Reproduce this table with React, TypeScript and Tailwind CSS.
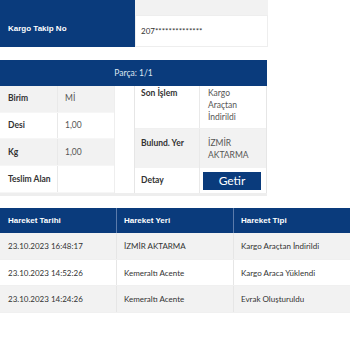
import React from "react";

const blue = "bg-[#0a3b7c]";

const leftRows = [
  { label: "Birim", value: "Mİ", gray: true },
  { label: "Desi", value: "1,00", gray: false },
  { label: "Kg", value: "1,00", gray: true },
  { label: "Teslim Alan", value: "", gray: false },
];

const moves = [
  { date: "23.10.2023 16:48:17", place: "İZMİR AKTARMA", type: "Kargo Araçtan İndirildi" },
  { date: "23.10.2023 14:52:26", place: "Kemeraltı Acente", type: "Kargo Araca Yüklendi" },
  { date: "23.10.2023 14:24:26", place: "Kemeraltı Acente", type: "Evrak Oluşturuldu" },
];

export default function App() {
  return (
    <div className="w-[350px] h-[350px] bg-white overflow-hidden font-['Lato','Noto_Sans',sans-serif] text-[#444]">
      {/* Takip no */}
      <div className="flex w-[268px]">
        <div className={`${blue} w-[135px] h-[47px] flex items-end pb-[12px] pl-[8px]`}>
          <span className="font-['Liberation_Sans',Arial,sans-serif] font-bold text-white text-[8px] leading-[12px]">
            Kargo Takip No
          </span>
        </div>
        <div className="flex-1 flex flex-col">
          <div className="h-[15px] bg-[#f2f2f2]" />
          <div className="h-[32px] border border-[#eeeeee] flex items-center pl-[5px] text-[8px] text-[#333]">
            207**************
          </div>
        </div>
      </div>

      {/* Parça */}
      <div className="mt-[13px] w-[267px] border-b-[3px] border-[#eeeeee]">
        <div className={`${blue} h-[26px] flex items-center justify-center text-[8.5px] text-[#dfe6f0]`}>
          Parça: 1/1
        </div>
        <div className="flex justify-between">
          <div className="w-[115px] border-r border-[#eeeeee]">
            {leftRows.map((r) => (
              <div
                key={r.label}
                className={`flex h-[26.7px] ${r.gray ? "bg-[#f2f2f2]" : "bg-white"} border-b border-[#f6f6f6]`}
              >
                <div className="w-[58px] border-r border-[#e9e9e9] flex items-center pl-[8px] font-bold text-[8.5px] text-[#333]">
                  {r.label}
                </div>
                <div className="flex-1 flex items-center pl-[7px] text-[8.5px] text-[#555]">{r.value}</div>
              </div>
            ))}
          </div>
          <div className="w-[133px] border-l border-r border-[#e6e6e6]">
            <div className="flex h-[43px] bg-white border-b border-[#f0f0f0]">
              <div className="w-[65px] border-r border-[#e9e9e9] pl-[6px] pt-[1px] font-bold text-[8.5px] leading-[12px] text-[#333]">
                Son İşlem
              </div>
              <div className="flex-1 pl-[8px] pt-[1px] text-[8.5px] leading-[12px] text-[#555]">
                Kargo
                <br />
                Araçtan
                <br />
                İndirildi
              </div>
            </div>
            <div className="flex h-[39px] bg-[#f2f2f2]">
              <div className="w-[65px] border-r border-[#e9e9e9] pl-[6px] pt-[8px] font-bold text-[8.5px] leading-[12px] text-[#333]">
                Bulund. Yer
              </div>
              <div className="flex-1 pl-[8px] pt-[8px] text-[8.5px] leading-[12px] text-[#555]">
                İZMİR
                <br />
                AKTARMA
              </div>
            </div>
            <div className="flex h-[25px] bg-white">
              <div className="w-[65px] border-r border-[#e9e9e9] pl-[6px] flex items-center font-bold text-[8.5px] text-[#333]">
                Detay
              </div>
              <div className="flex-1 flex items-center pl-[3px]">
                <button className={`${blue} w-[58px] h-[18px] text-white text-[12px] leading-[18px]`}>Getir</button>
              </div>
            </div>
          </div>
        </div>
      </div>

      {/* Hareketler */}
      <div className="mt-[12px] w-[350px]">
        <div className={`${blue} flex h-[25px] font-['Liberation_Sans',Arial,sans-serif] font-bold text-white text-[8px]`}>
          <div className="w-[117px] border-r border-[#5b7bab] flex items-center pl-[8px]">Hareket Tarihi</div>
          <div className="w-[117px] border-r border-[#5b7bab] flex items-center pl-[7px]">Hareket Yeri</div>
          <div className="flex-1 flex items-center pl-[7px]">Hareket Tipi</div>
        </div>
        {moves.map((m, i) => (
          <div
            key={m.date}
            className={`flex h-[26.7px] text-[8px] text-[#333] border-b border-[#f0f0f0] ${i % 2 === 0 ? "bg-[#f2f2f2]" : "bg-white"}`}
          >
            <div className="w-[117px] border-r border-[#e6e6e6] flex items-center pl-[8px]">{m.date}</div>
            <div className="w-[117px] border-r border-[#e6e6e6] flex items-center pl-[7px]">{m.place}</div>
            <div className="flex-1 flex items-center pl-[7px]">{m.type}</div>
          </div>
        ))}
      </div>
    </div>
  );
}
